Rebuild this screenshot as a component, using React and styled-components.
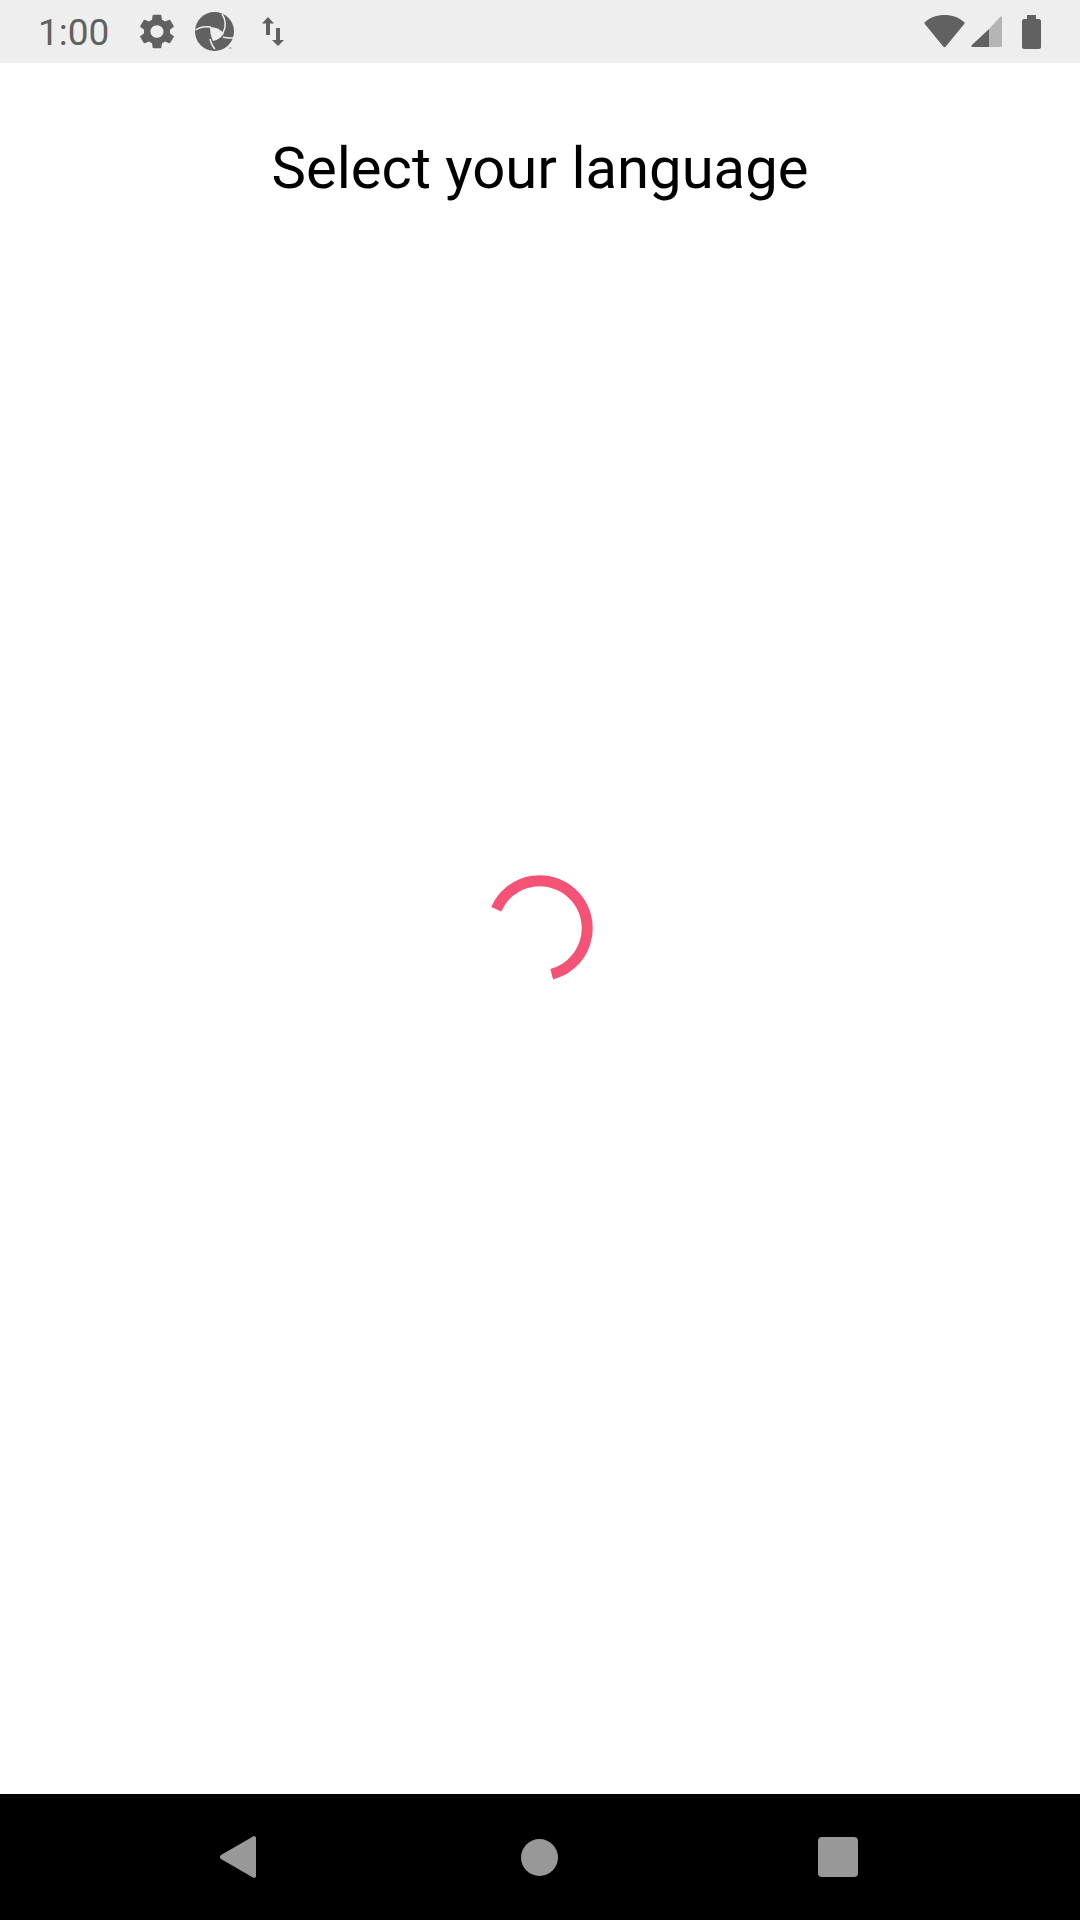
import React from 'react'
import styled, { createGlobalStyle } from 'styled-components'

const GlobalStyle = createGlobalStyle`
  html, body {
    margin: 0;
    padding: 0;
    background: #fff;
  }
`

const Screen = styled.div`
  width: 1080px;
  height: 1920px;
  display: flex;
  flex-direction: column;
  overflow: hidden;
  font-family: Roboto, "Liberation Sans", sans-serif;
`

const StatusBar = styled.div`
  height: 63px;
  flex-shrink: 0;
  background: #eeeeee;
  color: #616161;
  display: flex;
  align-items: center;
  justify-content: space-between;
  padding: 0 39px 0 38px;
  box-sizing: border-box;
`

const StatusGroup = styled.div`
  display: flex;
  align-items: center;
`

const Clock = styled.span`
  font-size: 37px;
  font-weight: 400;
  line-height: 63px;
  padding-top: 2px;
  width: 102px;
`

const IconSlot = styled.span`
  display: flex;
  margin-right: ${({ $after }) => $after || 0}px;
`

const Main = styled.main`
  flex: 1;
  display: flex;
  flex-direction: column;
`

const Title = styled.h1`
  margin: 0;
  height: 146px;
  padding-top: 72px;
  box-sizing: border-box;
  text-align: center;
  font-size: 58px;
  line-height: 66px;
  font-weight: 400;
  color: #000;
`

const LoaderArea = styled.div`
  flex: 1;
  display: flex;
  align-items: center;
  justify-content: center;
  padding-bottom: 146px;
`

const NavBar = styled.nav`
  height: 126px;
  flex-shrink: 0;
  background: #000;
  display: flex;
  align-items: center;
  padding-left: 220px;
  gap: 260px;
`

const BackSlot = styled.span`
  display: flex;
  margin-right: 5px;
`

const Gear = () => (
  <svg width="34" height="35" viewBox="2.6 2 18.8 20" preserveAspectRatio="none" fill="currentColor">
    <path d="M19.14 12.94c.04-.3.06-.61.06-.94 0-.32-.02-.64-.07-.94l2.03-1.58a.49.49 0 0 0 .12-.61l-1.92-3.32a.488.488 0 0 0-.59-.22l-2.39.96c-.5-.38-1.03-.7-1.62-.94l-.36-2.54a.484.484 0 0 0-.48-.41h-3.84c-.24 0-.43.17-.47.41l-.36 2.54c-.59.24-1.13.57-1.62.94l-2.39-.96c-.22-.08-.47 0-.59.22L2.74 8.87c-.12.21-.08.47.12.61l2.03 1.58c-.05.3-.09.63-.09.94s.02.64.07.94l-2.03 1.58a.49.49 0 0 0-.12.61l1.92 3.32c.12.22.37.29.59.22l2.39-.96c.5.38 1.03.7 1.62.94l.36 2.54c.05.24.24.41.48.41h3.84c.24 0 .44-.17.47-.41l.36-2.54c.59-.24 1.13-.56 1.62-.94l2.39.96c.22.08.47 0 .59-.22l1.92-3.32c.12-.22.07-.47-.12-.61l-2.01-1.58zM12 15.6c-1.98 0-3.6-1.62-3.6-3.6s1.62-3.6 3.6-3.6 3.6 1.62 3.6 3.6-1.62 3.6-3.6 3.6z" />
  </svg>
)

const Shutter = () => (
  <svg width="40" height="40" viewBox="0 0 40 40" fill="currentColor">
    <circle cx="19.500" cy="19.500" r="19.500" />
    <path d="M15 15c5 0 10 2 14 6-2 4-6 7-11 8-2-4-3-9-3-14z" fill="#eeeeee" />
    <path d="M0.500 18C5 15 10 14 16 15M27 2c4 6 4 13 1 19M38 26c-3 0-7 0-10-1M20 37c-3-3-4-6-5-10" fill="none" stroke="#eeeeee" strokeWidth="1.500" />
    <rect x="34" y="35.500" width="2.500" height="1" fill="#8a8a8a" />
  </svg>
)

const DataArrows = () => (
  <svg width="22" height="29" viewBox="0 0 22 29" fill="currentColor">
    <path d="M6 0l6 6.500H8V18H4V6.500H0z" />
    <path d="M14 11h4v12h4l-6 6-6-6h4z" />
  </svg>
)

const Wifi = () => (
  <svg width="41" height="34" viewBox="0 0 41 34" fill="currentColor">
    <path d="M20.500 0C13 0 6 2.600 1 7c-.7.600-.7 1.400-.2 2l18.400 22.500c.8 1 1.800 1 2.600 0L40.200 9c.5-.6.5-1.400-.2-2C35 2.600 28 0 20.500 0z" />
  </svg>
)

const Signal = () => (
  <svg width="31" height="31" viewBox="0 0 31 31">
    <path d="M18 13L29.300.7c.7-.7 1.700-.2 1.700.8v28c0 .8-.7 1.500-1.500 1.500H18z" fill="#b5b5b5" />
    <path d="M18 13v18H1.500c-1 0-1.500-1-.8-1.700z" fill="currentColor" />
  </svg>
)

const Battery = () => (
  <svg width="19" height="34" viewBox="0 0 19 34" fill="currentColor">
    <path d="M5 0h9v4h3c1 0 2 1 2 2v26c0 1-1 2-2 2H2c-1 0-2-1-2-2V6c0-1 1-2 2-2h3z" />
  </svg>
)

const Spinner = () => (
  <svg width="110" height="110" viewBox="-2 -2 110 110" fill="none">
    <path d="M9.200 33.200A47.500 47.500 0 1 1 64.700 98.200" stroke="#f55376" strokeWidth="11" />
  </svg>
)

const BackIcon = () => (
  <svg width="36" height="42" viewBox="0 0 36 42" fill="#989898">
    <path d="M34 0c1 0 2 1 2 2v38c0 1-1 2-2 2-.4 0-.8-.2-1-.4L1 23c-1.400-.9-1.400-3 0-4L33 .4c.2-.2.600-.4 1-.4z" />
  </svg>
)

const HomeIcon = styled.div`
  width: 37px;
  height: 37px;
  border-radius: 50%;
  background: #989898;
`

const RecentsIcon = styled.div`
  width: 40px;
  height: 40px;
  border-radius: 4px;
  background: #989898;
`

export default function App() {
  return (
    <>
      <GlobalStyle />
      <Screen>
        <StatusBar>
          <StatusGroup>
            <Clock>1:00</Clock>
            <IconSlot $after={21}>
              <Gear />
            </IconSlot>
            <IconSlot $after={27}>
              <Shutter />
            </IconSlot>
            <IconSlot>
              <DataArrows />
            </IconSlot>
          </StatusGroup>
          <StatusGroup>
            <IconSlot $after={6}>
              <Wifi />
            </IconSlot>
            <IconSlot $after={20}>
              <Signal />
            </IconSlot>
            <IconSlot>
              <Battery />
            </IconSlot>
          </StatusGroup>
        </StatusBar>
        <Main>
          <Title>Select your language</Title>
          <LoaderArea>
            <Spinner />
          </LoaderArea>
        </Main>
        <NavBar>
          <BackSlot>
            <BackIcon />
          </BackSlot>
          <HomeIcon />
          <RecentsIcon />
        </NavBar>
      </Screen>
    </>
  )
}
